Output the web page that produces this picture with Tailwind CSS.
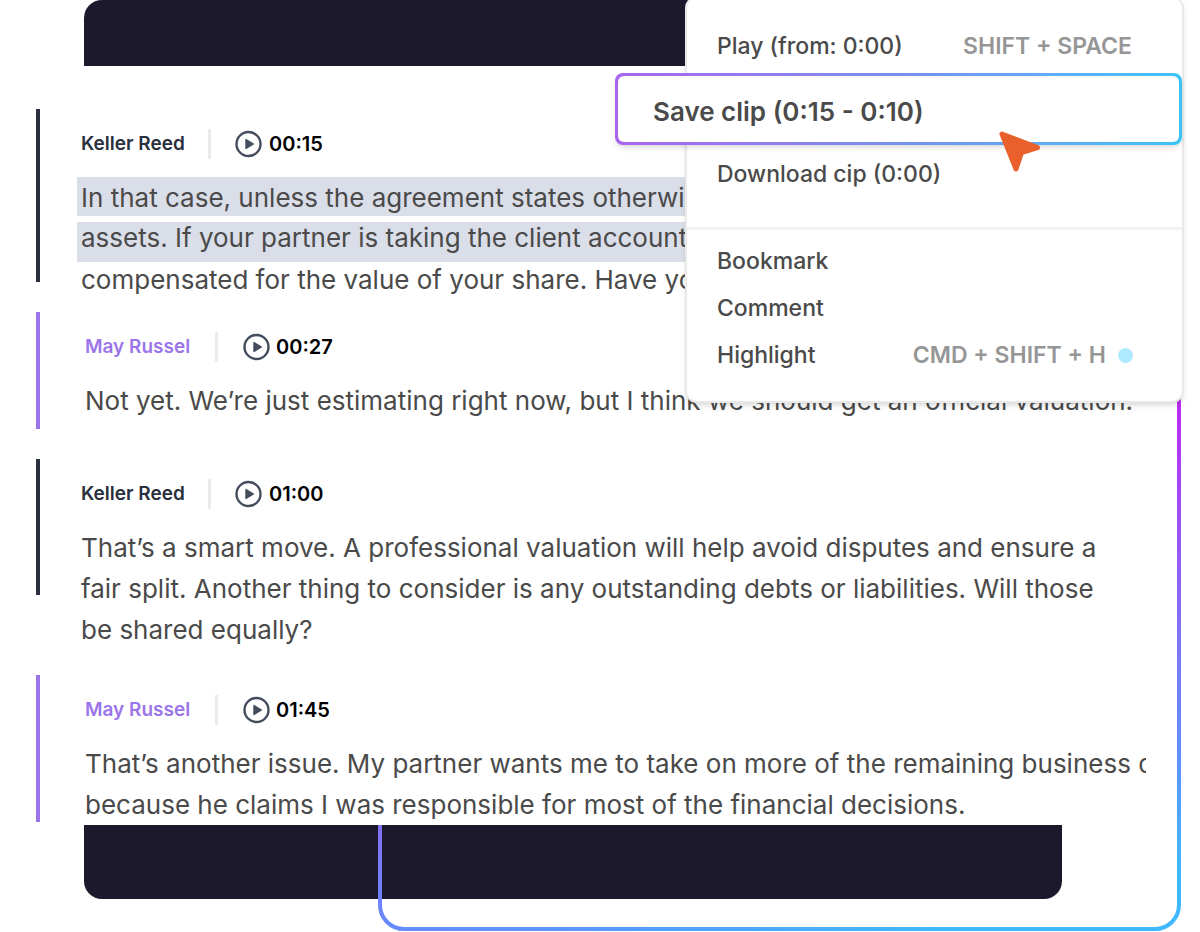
<!DOCTYPE html>
<html lang="en">
<head>
  <meta charset="UTF-8" />
  <meta name="viewport" content="width=device-width, initial-scale=1.0" />
  <title>Transcript - Save clip</title>
  <script src="https://cdn.jsdelivr.net/npm/@tailwindcss/browser@4"></script>
</head>
<body class="bg-white font-['Inter',sans-serif] text-[#4a4a4a]">

  <svg class="hidden">
    <symbol id="play" viewBox="0 0 28 28">
      <circle cx="13.500" cy="14" r="12" fill="none" stroke="#434d5c" stroke-width="2.4" />
      <path d="M11 9.600v8.800l7.400-4.400z" fill="#434d5c" stroke="#434d5c" stroke-width="1.4" stroke-linejoin="round" />
    </symbol>
  </svg>

  <div class="relative isolate min-h-screen overflow-hidden pb-[33px]">

    <!-- Gradient frame -->
    <svg class="absolute top-0 right-[19px] bottom-px left-[378px] h-[calc(100%-1px)] w-[calc(100%-397px)]" aria-hidden="true">
      <defs>
        <linearGradient id="frame" gradientUnits="userSpaceOnUse" x1="700" y1="428" x2="810" y2="868">
          <stop offset="0" stop-color="#bb2cf2" />
          <stop offset="0.5" stop-color="#7f74f4" />
          <stop offset="0.75" stop-color="#6090fd" />
          <stop offset="1" stop-color="#40b8ff" />
        </linearGradient>
      </defs>
      <rect x="2" y="2" rx="24" class="h-[calc(100%-4px)] w-[calc(100%-4px)]" fill="none" stroke="url(#frame)" stroke-width="4" />
    </svg>

    <div class="relative mr-[138px] ml-[84px] h-[66px] rounded-tl-[18px] bg-[#1d192d]"></div>

    <!-- Transcript -->
    <main class="relative mr-[54px] overflow-hidden bg-white pt-[43px] pl-9">

      <article class="flex">
        <div class="h-[173px] w-1 shrink-0 bg-[#2a303d]"></div>
        <div class="pt-5 pl-[41px]">
          <header class="flex h-[30px] items-center">
            <h2 class="w-[127px] text-[19px] leading-[30px] font-semibold text-[#2a303d]">Keller Reed</h2>
            <span class="h-[30px] w-[3px] bg-[#ebebeb]"></span>
            <button type="button" class="ml-6 flex items-center gap-[6px] text-xl leading-[30px] font-semibold text-black">
              <svg class="size-7" aria-hidden="true"><use href="#play" /></svg>00:15
            </button>
          </header>
          <div class="mt-[18px] text-[26px] leading-[41px] whitespace-nowrap">
            <p class="-ml-1 h-[41px]"><mark class="block h-[39px] w-[640px] bg-[#dadee8] pl-1 text-inherit">In that case, unless the agreement states otherwise,</mark></p>
            <p class="-ml-1 h-[41px] pt-1"><mark class="block h-10 w-[640px] bg-[#dadee8] pl-1 leading-8 text-inherit">assets. If your partner is taking the client accounts,</mark></p>
            <p>compensated for the value of your share. Have you</p>
          </div>
        </div>
      </article>

      <article class="mt-3 flex">
        <div class="h-[117px] w-1 shrink-0 bg-[#9b75e9]"></div>
        <div class="pt-5 pl-[45px]">
          <header class="flex h-[30px] items-center">
            <h2 class="w-[130px] text-[19px] leading-[30px] font-semibold text-[#9b75e9]">May Russel</h2>
            <span class="h-[30px] w-[3px] bg-[#ebebeb]"></span>
            <button type="button" class="ml-[25px] flex items-center gap-[5px] text-xl leading-[30px] font-semibold text-black">
              <svg class="size-7" aria-hidden="true"><use href="#play" /></svg>00:27
            </button>
          </header>
          <p class="mt-[18px] text-[26px] leading-[41px] whitespace-nowrap">Not yet. We’re just estimating right now, but I think we should get an official valuation.</p>
        </div>
      </article>

      <article class="mt-[30px] flex">
        <div class="h-[136px] w-1 shrink-0 bg-[#2a303d]"></div>
        <div class="pt-5 pl-[41px]">
          <header class="flex h-[30px] items-center">
            <h2 class="w-[127px] text-[19px] leading-[30px] font-semibold text-[#2a303d]">Keller Reed</h2>
            <span class="h-[30px] w-[3px] bg-[#ebebeb]"></span>
            <button type="button" class="ml-6 flex items-center gap-[6px] text-xl leading-[30px] font-semibold text-black">
              <svg class="size-7" aria-hidden="true"><use href="#play" /></svg>01:00
            </button>
          </header>
          <p class="mt-[18px] text-[26px] leading-[41px] whitespace-nowrap">
            That’s a smart move. A professional valuation will help avoid disputes and ensure a<br />
            fair split. Another thing to consider is any outstanding debts or liabilities. Will those<br />
            be shared equally?
          </p>
        </div>
      </article>

      <article class="mt-[25px] flex">
        <div class="h-[147px] w-1 shrink-0 bg-[#9b75e9]"></div>
        <div class="pt-5 pl-[45px]">
          <header class="flex h-[30px] items-center">
            <h2 class="w-[130px] text-[19px] leading-[30px] font-semibold text-[#9b75e9]">May Russel</h2>
            <span class="h-[30px] w-[3px] bg-[#ebebeb]"></span>
            <button type="button" class="ml-[25px] flex items-center gap-[5px] text-xl leading-[30px] font-semibold text-black">
              <svg class="size-7" aria-hidden="true"><use href="#play" /></svg>01:45
            </button>
          </header>
          <p class="mt-[18px] text-[26px] leading-[41px] whitespace-nowrap">
            That’s another issue. My partner wants me to take on more of the remaining business debts<br />
            because he claims I was responsible for most of the financial decisions.
          </p>
        </div>
      </article>
    </main>

    <div class="relative -z-10 mr-[138px] ml-[84px] h-[74px] rounded-b-[18px] bg-[#1d192d]"></div>

    <!-- Context menu -->
    <div class="absolute -top-1 right-4 w-[499px] rounded-xl border-2 border-[#e9e9e9] bg-white pb-[22px] text-[23px] font-medium shadow-md">
      <button type="button" class="flex h-[75px] w-full items-center justify-between pt-[22px] pr-[50px] pl-[30px]">
        <span>Play (from: 0:00)</span>
        <kbd class="font-['Inter',sans-serif] font-semibold text-[#969696]">SHIFT + SPACE</kbd>
      </button>
      <div class="relative -ml-[72px] rounded-lg bg-linear-to-r from-[#a964ee] via-[#7590ee] to-[#3cc4f6] p-[3px] shadow-md">
        <button type="button" class="block h-[66px] w-full rounded-md bg-white pt-1 pl-[35px] text-left text-[26px] font-semibold">Save clip (0:15 - 0:10)</button>
        <svg class="absolute top-[57px] right-[141px] h-[42px] w-[42px]" viewBox="0 0 42 42" aria-hidden="true">
          <path d="M3 4l35.500 13.700-16 5-5.500 16.300z" fill="#e9602c" stroke="#e9602c" stroke-width="5" stroke-linejoin="round" />
        </svg>
      </div>
      <button type="button" class="block h-[85px] w-full border-b-3 border-[#f2f2f2] pb-[23px] pl-[30px] text-left">Download cip (0:00)</button>
      <button type="button" class="mt-2 block h-[47px] w-full pl-[30px] text-left">Bookmark</button>
      <button type="button" class="block h-[47px] w-full pl-[30px] text-left">Comment</button>
      <button type="button" class="flex h-[47px] w-full items-center justify-between pr-[49px] pl-[30px]">
        <span>Highlight</span>
        <span class="flex items-center gap-3">
          <kbd class="font-['Inter',sans-serif] font-semibold text-[#969696]">CMD + SHIFT + H</kbd>
          <span class="size-[15px] rounded-full bg-[#aee9ff]"></span>
        </span>
      </button>
    </div>
  </div>

</body>
</html>
